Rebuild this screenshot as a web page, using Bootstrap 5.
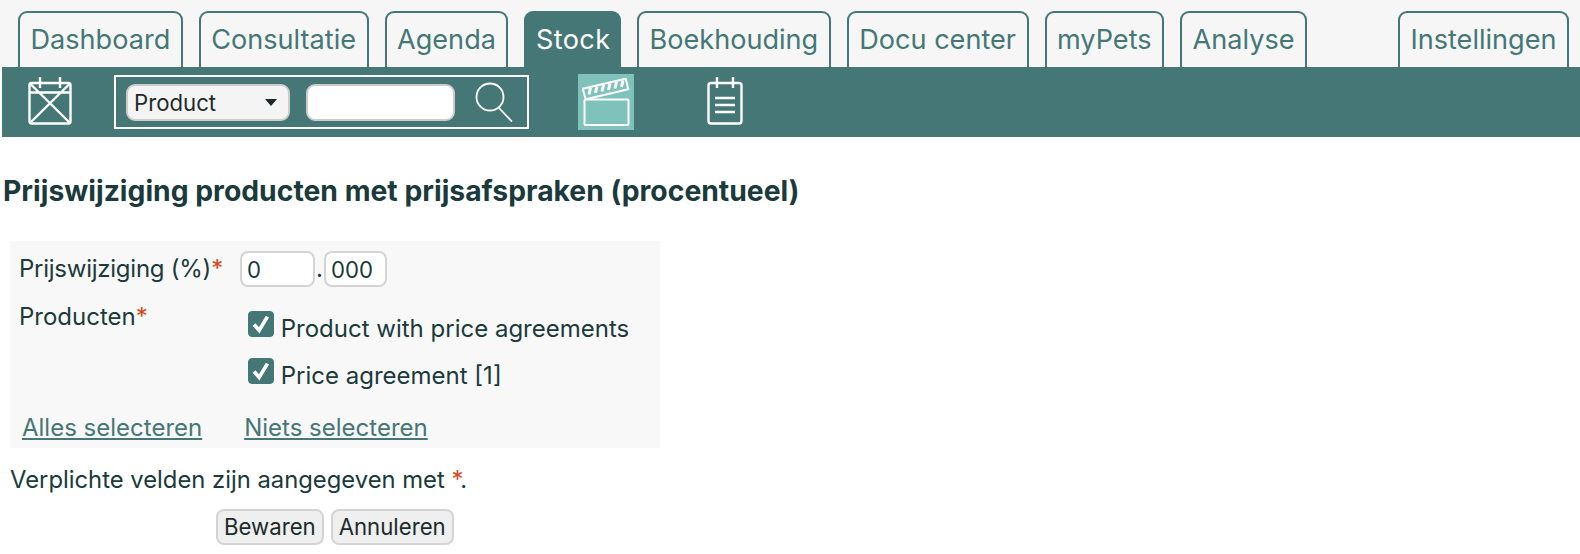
<!DOCTYPE html>
<html lang="nl">
<head>
    <meta charset="UTF-8">
    <meta name="viewport" content="width=device-width, initial-scale=1.0">
    <title>Prijswijziging</title>
    <link href="https://cdn.jsdelivr.net/npm/bootstrap@5.3.0/dist/css/bootstrap.min.css" rel="stylesheet">
    <style>
        body {
            background-color: #fff;
            color: #1b3a3b;
            font-family: Inter, "Liberation Sans", sans-serif;
            font-size: 24px;
            overflow: hidden;
        }
        .top-tabs {
            background-color: #f6f6f6;
            height: 67px;
            padding: 11px 11px 0 18px;
            gap: 16px;
        }
        .top-tab {
            display: block;
            height: 56px;
            padding: 7px 10.5px 0;
            border: 2px solid #447776;
            border-bottom: 0;
            border-radius: 9px 9px 0 0;
            color: #447776;
            font-size: 27.1px;
            text-decoration: none;
        }
        .top-tab.is-active {
            padding: 7px 8.5px 0 9.5px;
            background-color: #447776;
            color: #fff;
            letter-spacing: .4px;
        }
        .tool-bar {
            background-color: #447776;
            height: 70px;
            margin-left: 2px;
            padding-left: 26px;
        }
        .tool-icon {
            margin-bottom: 3px;
        }
        .search-box {
            width: 415px;
            height: 54px;
            margin-left: 42px;
            padding-left: 10px;
            border: 2px solid #fff;
        }
        .search-select {
            width: 164px;
            height: 37px;
            padding: 1px 6px 0;
            border: 2px solid #ccc;
            border-radius: 9px;
            background-color: #f4f4f4;
            background-image: url("data:image/svg+xml,%3csvg xmlns='http://www.w3.org/2000/svg' viewBox='0 0 12 7'%3e%3cpath fill='%231b2b2b' d='M0 0h12L6 7z'/%3e%3c/svg%3e");
            background-size: 12px 7px;
            background-position: right 11px center;
            color: #1b2b2b;
            font-size: 22.2px;
            line-height: 32px;
        }
        .search-text {
            width: 149px;
            height: 37px;
            margin-left: 16px;
            border: 2px solid #ccc;
            border-radius: 9px;
        }
        .search-icon {
            margin-left: 20px;
        }
        .clap-btn {
            background-color: #7fc1bb;
            width: 56px;
            height: 56px;
            margin-left: 49px;
        }
        .notes-icon {
            margin-left: 73px;
        }
        .page-title {
            margin: 38px 0 0 3px;
            font-size: 28.3px;
            font-weight: 700;
            line-height: 32px;
            color: #1b3a3b;
        }
        .form-panel {
            background-color: #f8f8f8;
            width: 650px;
            height: 207px;
            margin: 34px 0 0 10px;
            padding: 10px 9px 0;
        }
        .field-label {
            width: 221px;
        }
        .label-tight {
            letter-spacing: -.25px;
        }
        .label-up {
            margin-top: -4px;
        }
        .req {
            color: #d9481c;
        }
        .num-input {
            height: 36px;
            padding: 0 5px;
            border: 2px solid #d4d4d4;
            border-radius: 8px;
            background: #fff;
            color: #1b3a3b;
            font-size: 22.2px;
        }
        .num-big {
            width: 75px;
        }
        .num-small {
            width: 63px;
        }
        .num-dot {
            padding: 0 1px;
        }
        .price-check {
            min-height: 0;
            margin: 0 0 21px;
            padding: 0;
            line-height: 26px;
        }
        .price-check .form-check-input {
            float: none;
            width: 26px;
            height: 26px;
            margin: 0;
            border-color: #447776;
            background-color: #447776;
            background-image: url("data:image/svg+xml,%3csvg xmlns='http://www.w3.org/2000/svg' viewBox='0 0 26 26'%3e%3cpath fill='none' stroke='%23fff' stroke-width='4' d='M5.500 13.500 11 20 20 5'/%3e%3c/svg%3e");
            border-radius: 4px;
        }
        .price-check .form-check-label {
            position: relative;
            top: 5px;
        }
        .link-row {
            gap: 42px;
            margin-top: 5px;
            padding-left: 3px;
        }
        .panel-link {
            color: #447776;
        }
        .required-note {
            margin: 17px 0 0 10px;
            font-size: 23.8px;
            line-height: 30px;
        }
        .form-actions {
            margin: 14px 0 0 216px;
            gap: 7px;
        }
        .plain-btn {
            height: 36px;
            padding: 0 6px;
            border: 2px solid #d4d4d4;
            border-radius: 8px;
            background-color: #efefef;
            color: #1b2b2b;
            font-size: 22.2px;
            line-height: 30px;
        }
    </style>
</head>
<body>
    <!-- Tabs -->
    <nav class="top-tabs d-flex">
        <a class="top-tab" href="#">Dashboard</a>
        <a class="top-tab" href="#">Consultatie</a>
        <a class="top-tab" href="#">Agenda</a>
        <a class="top-tab is-active" href="#">Stock</a>
        <a class="top-tab" href="#">Boekhouding</a>
        <a class="top-tab" href="#">Docu center</a>
        <a class="top-tab" href="#">myPets</a>
        <a class="top-tab" href="#">Analyse</a>
        <a class="top-tab ms-auto" href="#">Instellingen</a>
    </nav>

    <!-- Toolbar -->
    <div class="tool-bar d-flex align-items-center">
        <svg class="tool-icon" width="44" height="48" viewBox="0 0 44 48" fill="none" stroke="#fff" stroke-width="2.400">
            <rect x="1.500" y="6" width="41" height="40.500" rx="2"/>
            <path d="M1.500 15.500h41M12 0v11M32 0v11M2 6.500 42 46M42 6.500 2 46"/>
        </svg>
        <div class="search-box d-flex align-items-center">
            <select class="form-select search-select" aria-label="Zoeken op">
                <option>Product</option>
            </select>
            <input class="search-text" type="text" aria-label="Zoekterm">
            <svg class="search-icon" width="38" height="40" viewBox="0 0 38 40" fill="none" stroke="#fff" stroke-width="1.800">
                <circle cx="15" cy="15" r="13.500"/>
                <path d="M24 26 37 39.500"/>
            </svg>
        </div>
        <div class="clap-btn d-flex align-items-center justify-content-center">
            <svg width="48" height="48" viewBox="0 0 48 48" fill="none" stroke="#fff" stroke-width="2">
                <rect x="2.500" y="21.500" width="44" height="25.500" rx="1"/>
                <path d="M.7 10.700 43.700.7l2.600 10.600-42.600 10z"/>
                <path d="M7 16.500 8.500 10M13.500 15 15 8.500M20 13.500 21.500 7M26.500 12 28 5.500M33 10.500 34.500 4M39.500 9 41 2.500" stroke-width="3"/>
            </svg>
        </div>
        <svg class="notes-icon tool-icon" width="36" height="48" viewBox="0 0 36 48" fill="none" stroke="#fff" stroke-width="2.400">
            <rect x="1.500" y="6" width="33" height="40.500" rx="2.500"/>
            <path d="M10 0v11M26 0v11M8 21h20M8 28h20M8 35h20"/>
        </svg>
    </div>

    <h1 class="page-title">Prijswijziging producten met prijsafspraken (procentueel)</h1>

    <!-- Form -->
    <form class="form-panel">
        <div class="d-flex align-items-center">
            <div class="field-label label-tight">Prijswijziging (%)<span class="req">*</span></div>
            <input class="num-input num-big" type="text" value="0" aria-label="Procent">
            <span class="num-dot">.</span>
            <input class="num-input num-small" type="text" value="000" aria-label="Decimalen">
        </div>
        <div class="d-flex mt-3">
            <div class="field-label label-up">Producten<span class="req">*</span></div>
            <div class="ps-2 pt-2">
                <div class="form-check price-check">
                    <input class="form-check-input" type="checkbox" id="prod1" checked>
                    <label class="form-check-label" for="prod1">Product with price agreements</label>
                </div>
                <div class="form-check price-check">
                    <input class="form-check-input" type="checkbox" id="prod2" checked>
                    <label class="form-check-label" for="prod2">Price agreement [1]</label>
                </div>
            </div>
        </div>
        <div class="link-row d-flex">
            <a class="panel-link" href="#">Alles selecteren</a>
            <a class="panel-link" href="#">Niets selecteren</a>
        </div>
    </form>

    <p class="required-note">Verplichte velden zijn aangegeven met <span class="req">*</span>.</p>
    <div class="form-actions d-flex">
        <button class="plain-btn" type="button">Bewaren</button>
        <button class="plain-btn" type="button">Annuleren</button>
    </div>
    <script src="https://cdn.jsdelivr.net/npm/bootstrap@5.3.0/dist/js/bootstrap.bundle.min.js"></script>
</body>
</html>
